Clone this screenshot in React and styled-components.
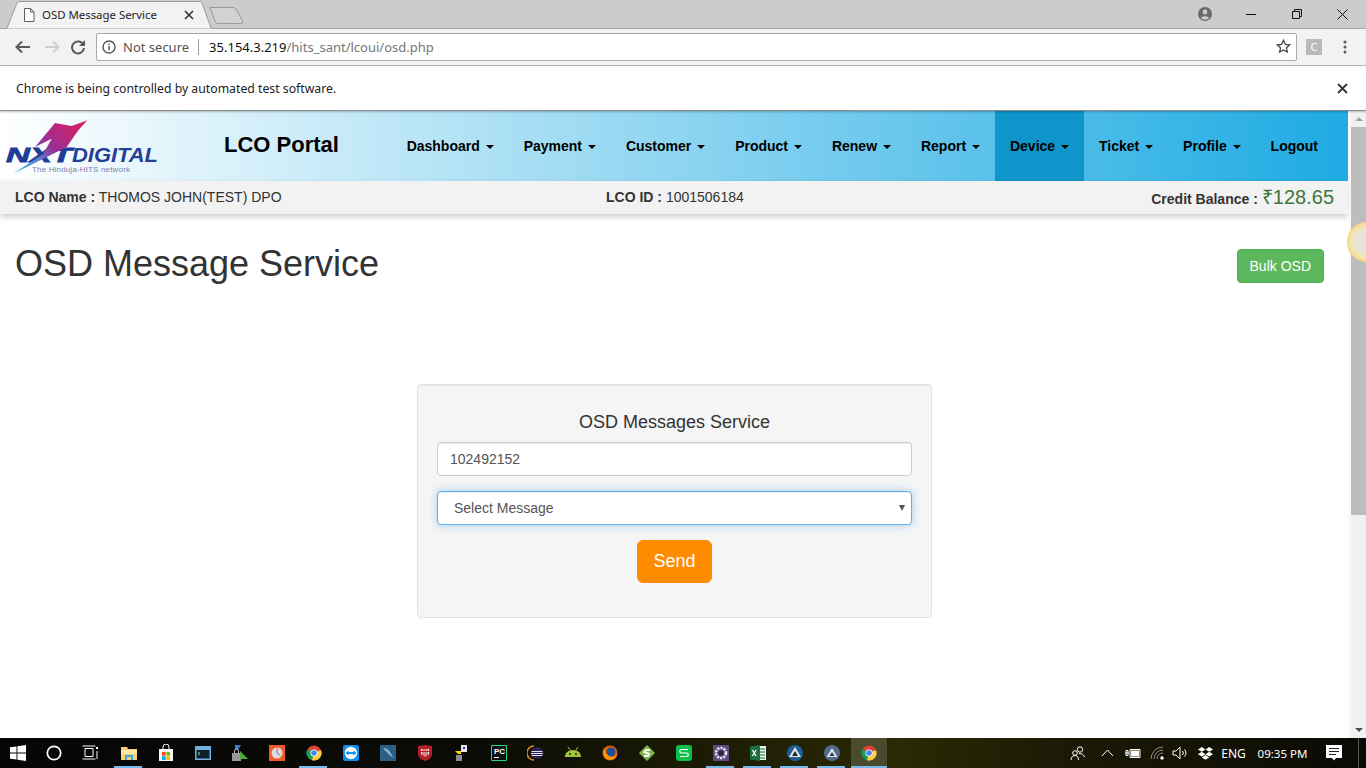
import styled, { createGlobalStyle } from 'styled-components';

const GlobalStyle = createGlobalStyle`
  html, body {
    margin: 0;
    padding: 0;
    height: 768px;
    overflow: hidden;
    background: #fff;
    font-family: "Liberation Sans", Arial, sans-serif;
  }
  * { box-sizing: border-box; }
`;

const UI_FONT = `"Noto Sans", "Open Sans", sans-serif`;

const Screen = styled.div`
  width: 1366px;
  height: 768px;
  display: flex;
  flex-direction: column;
  overflow: hidden;
  position: relative;
`;

/* ---------- browser chrome ---------- */

const TabStrip = styled.div`
  height: 29px;
  background: #cccccc;
  border-bottom: 1px solid #a6a6a6;
  display: flex;
  align-items: flex-start;
  padding-left: 5px;
`;

const Tab = styled.div`
  position: relative;
  width: 208px;
  height: 29px;
  display: flex;
  align-items: center;
  padding: 0 0 0 18px;
  font: 11.4px ${UI_FONT};
  color: #222;
  flex: none;
`;

const TabShape = styled.svg`
  position: absolute;
  left: 0;
  top: 0;
`;

const TabIcon = styled.svg`
  position: relative;
  margin-right: 7px;
`;

const TabTitle = styled.span`
  position: relative;
  width: 142px;
  white-space: nowrap;
`;

const TabClose = styled.svg`
  position: relative;
`;

const NewTab = styled.svg`
  margin: 6px 0 0 -4px;
  flex: none;
`;

const WindowButtons = styled.div`
  margin-left: auto;
  margin-right: 1px;
  display: flex;
  align-items: center;
  height: 28px;
`;

const WindowCell = styled.div`
  width: ${(p) => p.$w}px;
  display: flex;
  justify-content: center;
`;

const Toolbar = styled.div`
  height: 37px;
  background: #f2f2f2;
  border-bottom: 1px solid #b4b4b4;
  display: flex;
  align-items: center;
  padding-left: 14px;
`;

const NavIcon = styled.svg`
  flex: none;
  margin-right: ${(p) => p.$mr || 0}px;
  margin-left: ${(p) => p.$ml || 0};
`;

const Omnibox = styled.div`
  width: 1201px;
  height: 28px;
  margin: -1px 0 0 9px;
  background: #fff;
  border: 1px solid #a9a9a9;
  border-radius: 2px;
  display: flex;
  align-items: center;
  padding-left: 5px;
  font: 13px ${UI_FONT};
  color: #555;
  flex: none;
`;

const Divider = styled.span`
  width: 1px;
  height: 16px;
  background: #9a9a9a;
  margin: 0 10px 0 9px;
`;

const Host = styled.span`
  color: #111;
`;

const Path = styled.span`
  color: #777;
`;

const ExtBadge = styled.div`
  width: 16px;
  height: 16px;
  margin-left: 9px;
  background: #b9b9b9;
  color: #fff;
  font: 11px/16px ${UI_FONT};
  text-align: center;
  flex: none;
`;

const InfoBar = styled.div`
  height: 45px;
  background: #fff;
  border-bottom: 1px solid #8d8d8d;
  box-shadow: 0 1px 2px rgba(0, 0, 0, 0.25);
  display: flex;
  align-items: center;
  justify-content: space-between;
  padding: 0 18px 0 16px;
  font: 12.25px ${UI_FONT};
  color: #222;
  position: relative;
  z-index: 2;
`;

/* ---------- page ---------- */

const Viewport = styled.div`
  flex: 1;
  display: flex;
  min-height: 0;
`;

const Page = styled.div`
  width: 1349px;
  background: #fff;
  display: flex;
  flex-direction: column;
`;

const Navbar = styled.div`
  height: 70px;
  margin-right: 1px;
  display: flex;
  align-items: stretch;
  background: linear-gradient(to right, #ffffff 0%, #1eabe3 100%);
`;

const LogoSvg = styled.svg`
  margin: 7px 0 0 4px;
  flex: none;
`;

const Brand = styled.div`
  margin-left: 64px;
  font-size: 22px;
  font-weight: 700;
  color: #000;
  line-height: 68px;
  white-space: nowrap;
`;

const Menu = styled.div`
  margin-left: auto;
  margin-right: 15px;
  display: flex;
`;

const MenuItem = styled.div`
  padding: 0 15px;
  font-size: 14px;
  font-weight: 700;
  color: #000;
  line-height: 70px;
  white-space: nowrap;
  background: ${(p) => (p.$active ? '#0e96cb' : 'transparent')};
`;

const Caret = styled.span`
  display: inline-block;
  width: 0;
  height: 0;
  margin-left: 2px;
  vertical-align: middle;
  border-top: 4px solid #000;
  border-left: 4px solid transparent;
  border-right: 4px solid transparent;
`;

const InfoStrip = styled.div`
  height: 33px;
  margin-right: 1px;
  background: #f2f2f2;
  box-shadow: 0 3px 6px rgba(0, 0, 0, 0.2);
  display: grid;
  grid-template-columns: 591px 1fr auto;
  align-items: center;
  padding: 0 14px 2px 15px;
  font-size: 14px;
  color: #333;
`;

const Strong = styled.b`
  font-weight: 700;
`;

const Credit = styled.div`
  display: flex;
  align-items: baseline;
  font-weight: 700;
`;

const Amount = styled.span`
  font-size: 20px;
  font-weight: 400;
  color: #3c763d;
  margin-left: 4px;
`;

const Header = styled.div`
  display: flex;
  justify-content: space-between;
  align-items: flex-start;
  padding: 30px 25px 0 15px;
  height: 70px;
`;

const Title = styled.h1`
  margin: 0;
  font-size: 36px;
  font-weight: 400;
  line-height: 40px;
  color: #333;
`;

const BulkButton = styled.button`
  margin-top: 5px;
  height: 34px;
  padding: 0 12px;
  background: #5cb85c;
  border: 1px solid #4cae4c;
  border-radius: 4px;
  color: #fff;
  font: 14px "Liberation Sans", Arial, sans-serif;
`;

const Card = styled.div`
  width: 515px;
  height: 234px;
  margin: 100px auto 0;
  padding: 27px 19px 0;
  background: #f5f5f5;
  border: 1px solid #e3e3e3;
  border-radius: 4px;
  box-shadow: inset 0 1px 1px rgba(0, 0, 0, 0.05);
  display: flex;
  flex-direction: column;
`;

const CardTitle = styled.h4`
  margin: 0 0 10px;
  font-size: 18px;
  font-weight: 400;
  line-height: 20px;
  color: #333;
  text-align: center;
`;

const TextField = styled.input`
  height: 34px;
  width: 100%;
  padding: 6px 12px;
  border: 1px solid #ccc;
  border-radius: 4px;
  background: #fff;
  box-shadow: inset 0 1px 1px rgba(0, 0, 0, 0.075);
  color: #555;
  font: 14px "Liberation Sans", Arial, sans-serif;
  outline: none;
`;

const SelectWrap = styled.div`
  position: relative;
  margin-top: 15px;
`;

const SelectField = styled.select`
  appearance: none;
  height: 34px;
  width: 100%;
  padding: 6px 16px;
  border: 1px solid #66afe9;
  border-radius: 4px;
  background: #fff;
  box-shadow: inset 0 1px 1px rgba(0, 0, 0, 0.075), 0 0 8px rgba(102, 175, 233, 0.6);
  color: #555;
  font: 14px "Liberation Sans", Arial, sans-serif;
  outline: none;
`;

const SelectArrow = styled.span`
  position: absolute;
  right: 7px;
  top: 14px;
  width: 0;
  height: 0;
  border-top: 6px solid #555;
  border-left: 3.5px solid transparent;
  border-right: 3.5px solid transparent;
`;

const SendButton = styled.button`
  align-self: center;
  margin-top: 15px;
  width: 75px;
  height: 43px;
  background: #ff8c00;
  border: 1px solid #ff8c00;
  border-radius: 6px;
  color: #fff;
  font: 18px "Liberation Sans", Arial, sans-serif;
`;

const ScrollTrack = styled.div`
  width: 17px;
  background: #f1f1f1;
  border-left: 2px solid #f8f8f8;
  display: flex;
  flex-direction: column;
  align-items: center;
  position: relative;
`;

const ScrollArrow = styled.span`
  width: 0;
  height: 0;
  margin: 6px 0;
  flex: none;
  border-left: 4px solid transparent;
  border-right: 4px solid transparent;
  ${(p) => (p.$down ? 'border-top: 4px solid #505050;' : 'border-bottom: 4px solid #a3a3a3;')}
`;

const ScrollThumb = styled.div`
  width: 100%;
  height: 388px;
  background: #bdbdbd;
  flex: none;
`;

const ScrollSpace = styled.div`
  flex: 1;
`;

const CursorHalo = styled.div`
  position: absolute;
  left: 1347px;
  top: 222px;
  width: 40px;
  height: 40px;
  border-radius: 50%;
  background: radial-gradient(circle closest-side, #e2e2dc 0%, #e8e6d8 60%, #f5e2a5 86%, #f8d67a 100%);
  z-index: 3;
`;

/* ---------- taskbar ---------- */

const Taskbar = styled.div`
  height: 30px;
  flex: none;
  display: flex;
  align-items: stretch;
  background: linear-gradient(to right, #060606 0%, #0b0b06 35%, #2a2a04 66%, #1b1a05 78%, #0a0a06 100%);
  position: relative;
  z-index: 4;
`;

const TaskCell = styled.div`
  width: ${(p) => p.$w || 37}px;
  flex: none;
  display: flex;
  align-items: center;
  justify-content: center;
  position: relative;
  margin-left: ${(p) => (p.$active ? 1 : 0)}px;
  background: ${(p) => (p.$active ? '#4a4a2c' : 'transparent')};

  &::after {
    content: '';
    display: ${(p) => (p.$running ? 'block' : 'none')};
    position: absolute;
    bottom: 0;
    height: 2px;
    left: ${(p) => (p.$active ? 0 : 4)}px;
    right: ${(p) => (p.$active ? 0 : 5)}px;
    background: #76b9ed;
  }
`;

const TaskGap = styled.div`
  width: ${(p) => p.$w}px;
  flex: none;
`;

const Tray = styled.div`
  margin-left: auto;
  display: flex;
  align-items: center;
  color: #fff;
  font: 12px ${UI_FONT};
`;

const TrayCell = styled.div`
  width: ${(p) => p.$w}px;
  display: flex;
  justify-content: center;
  white-space: nowrap;
  font-size: ${(p) => p.$fs || 12}px;
`;

const ShowDesktop = styled.div`
  width: 8px;
  align-self: stretch;
  border-left: 1px solid #555;
`;

/* ---------- drawings ---------- */

const Logo = () => (
  <LogoSvg width="156" height="60" viewBox="0 0 156 60">
    <defs>
      <linearGradient id="sw" x1="0" y1="1" x2="1" y2="0">
        <stop offset="0" stopColor="#28c3e0" />
        <stop offset="0.3" stopColor="#5d7fd0" />
        <stop offset="0.5" stopColor="#9a2f98" />
        <stop offset="1" stopColor="#e01f58" />
      </linearGradient>
    </defs>
    <text x="2" y="44" fontFamily="Liberation Sans" fontStyle="italic" fontWeight="700" fontSize="20" fill="#1f3c96" stroke="#1f3c96" strokeWidth="0.8" textLength="66" lengthAdjust="spacingAndGlyphs">
      NXT
    </text>
    <text x="68" y="44" fontFamily="Liberation Sans" fontStyle="italic" fontWeight="700" fontSize="20" fill="#233f97" textLength="86" lengthAdjust="spacingAndGlyphs">
      DIGITAL
    </text>
    <path
      d="M83.3 2.3 L67.7 8 L51 5 L31 29 L47.7 20.7 L39.3 35.7 L9.3 55.7 L62.7 29 L74.3 12.3 Z"
      fill="url(#sw)"
    />
    <text x="28" y="54" fontFamily="Liberation Sans" fontSize="8" fill="#7583b3" textLength="98" lengthAdjust="spacing">
      The Hinduja-HITS network
    </text>
  </LogoSvg>
);

const Chrome = ({ size = 16 }) => (
  <svg width={size} height={size} viewBox="0 0 16 16">
    <circle cx="8" cy="8" r="7.5" fill="#db4437" />
    <path d="M8 8 L1.5 4.2 A7.5 7.5 0 0 0 6 15.2 Z" fill="#0f9d58" />
    <path d="M8 8 L14.9 5 A7.5 7.5 0 0 1 6 15.2 Z" fill="#ffcd40" />
    <circle cx="8" cy="8" r="3.6" fill="#fff" />
    <circle cx="8" cy="8" r="2.8" fill="#4285f4" />
  </svg>
);

const ic = { width: 18, height: 18, viewBox: '0 0 18 18' };

const apps = [
  {
    running: true,
    icon: (
      <svg {...ic}>
        <path d="M1 3h6l1 2h9v11H1z" fill="#f3d274" />
        <path d="M1 6h16v4H1z" fill="#fbe8a6" />
        <path d="M5 11h8v5h-2v-3H7v3H5z" fill="#3ea8dc" />
      </svg>
    ),
  },
  {
    icon: (
      <svg {...ic}>
        <path d="M2 5h14v12H2z" fill="#f5f5f5" />
        <path d="M6 5V3a3 3 0 0 1 6 0v2" fill="none" stroke="#f5f5f5" />
        <path d="M5 8h3.7v3.7H5z" fill="#f25022" />
        <path d="M9.4 8h3.7v3.7H9.4z" fill="#7fba00" />
        <path d="M5 12.3h3.7V16H5z" fill="#00a4ef" />
        <path d="M9.4 12.3h3.7V16H9.4z" fill="#ffb900" />
      </svg>
    ),
  },
  {
    icon: (
      <svg {...ic}>
        <path d="M1 2h16v14H1z" fill="#6fb1dc" />
        <path d="M2.5 6h13v8.5h-13z" fill="#0d1f2b" />
        <path d="M4 8l2 1.5L4 11" fill="none" stroke="#9ccf6a" />
      </svg>
    ),
  },
  {
    icon: (
      <svg {...ic}>
        <path d="M4 1h6l-3 5H4z" fill="#3f78c9" />
        <path d="M1 9h9v8H1z" fill="#9a9a9a" />
        <path d="M3.5 9V7a2 2 0 0 1 4 0v2" fill="none" stroke="#bbb" />
        <path d="M9 7l8 8h-8z" fill="#49ad3c" />
      </svg>
    ),
  },
  {
    icon: (
      <svg {...ic}>
        <path d="M1 1h16v16H1z" fill="#f15a29" />
        <circle cx="9" cy="9" r="5.5" fill="#dcdcdc" />
        <path d="M9 9V4.5M9 9l3 2" stroke="#777" fill="none" />
      </svg>
    ),
  },
  { running: true, icon: <Chrome /> },
  {
    icon: (
      <svg {...ic}>
        <path d="M3 1h12a2 2 0 0 1 2 2v12a2 2 0 0 1-2 2H3a2 2 0 0 1-2-2V3a2 2 0 0 1 2-2z" fill="#0e8ee9" />
        <circle cx="9" cy="9" r="6.2" fill="#fff" />
        <path d="M3.5 9l3-2.5V8h5V6.5l3 2.5-3 2.5V10h-5v1.5z" fill="#0e8ee9" />
      </svg>
    ),
  },
  {
    icon: (
      <svg {...ic}>
        <path d="M1 1h16v16H1z" fill="#2a5f86" />
        <path d="M4 4c5 0 8 4 10 10-3-3-6-5-10-10z" fill="#8ab7d2" />
      </svg>
    ),
  },
  {
    icon: (
      <svg {...ic}>
        <path d="M2 2l7-1 7 1v8c0 4-4 6-7 7-3-1-7-3-7-7z" fill="#b3202a" />
        <path d="M5 5h8v5l-4 3-4-3z" fill="#eee" />
        <path d="M7 5v7M9 5v8M11 5v7M5 7.5h8" stroke="#b3202a" />
      </svg>
    ),
  },
  {
    icon: (
      <svg {...ic}>
        <path d="M8 1h6v7H8z" fill="#e8e8e8" />
        <path d="M2 7h6v3H5z" fill="#f8d800" />
        <path d="M3 11h6v6H3z" fill="#8d8d8d" />
        <path d="M10 3h2v2h-2z" fill="#1b3a8a" />
      </svg>
    ),
  },
  {
    icon: (
      <svg {...ic}>
        <path d="M1.5 1.5h15v15h-15z" fill="#111" stroke="#21d789" />
        <text x="4" y="10" fontFamily="Liberation Sans" fontSize="8" fontWeight="700" fill="#fff">
          PC
        </text>
        <path d="M4 13h5v1H4z" fill="#fff" />
      </svg>
    ),
  },
  {
    icon: (
      <svg {...ic}>
        <path d="M7 2a7 7 0 0 0 0 14" fill="none" stroke="#e08a25" strokeWidth="1.4" />
        <circle cx="10" cy="9" r="6" fill="#2c2255" />
        <path d="M4.5 7.5h11M4 9.5h12M4.5 11.5h11" stroke="#dcdcf0" />
      </svg>
    ),
  },
  {
    icon: (
      <svg {...ic}>
        <path d="M1 13c0-4 3-7 8-7s8 3 8 7z" fill="#a4c639" />
        <path d="M4 3l2 3M14 3l-2 3" stroke="#a4c639" />
        <circle cx="6" cy="10" r="0.9" fill="#111" />
        <circle cx="12" cy="10" r="0.9" fill="#111" />
      </svg>
    ),
  },
  {
    icon: (
      <svg {...ic}>
        <circle cx="9" cy="9" r="7.5" fill="#e66000" />
        <circle cx="10" cy="8" r="4.5" fill="#1f4e9e" />
        <path d="M3 4c1 4 3 8 8 9 2 0 4-1 5-3-1 5-6 7-10 5-3-2-5-6-3-11z" fill="#ff9500" />
      </svg>
    ),
  },
  {
    icon: (
      <svg {...ic}>
        <path d="M9 1l8 8-8 8-8-8z" fill="#7cb54a" />
        <path d="M12 6H8L6.5 8 11 10l-1 2H6" fill="none" stroke="#fff" strokeWidth="2" />
      </svg>
    ),
  },
  {
    icon: (
      <svg {...ic}>
        <rect x="1" y="1" width="16" height="16" rx="3" fill="#0bc04a" />
        <path d="M13 5.5H6.5a1.7 1.7 0 0 0 0 3.5h5a1.7 1.7 0 0 1 0 3.5H5" fill="none" stroke="#fff" strokeWidth="1.2" />
      </svg>
    ),
  },
  {
    running: true,
    icon: (
      <svg {...ic}>
        <path d="M1 1h16v16H1z" fill="#5e4a80" />
        <circle cx="9" cy="9" r="5" fill="none" stroke="#e8e8e8" strokeWidth="2.6" strokeDasharray="2.2 1" />
        <circle cx="9" cy="9" r="2.6" fill="#2e2440" />
      </svg>
    ),
  },
  {
    running: true,
    icon: (
      <svg {...ic}>
        <path d="M10 2h7v14h-7z" fill="#e8f2ec" />
        <path d="M11 5h5M11 8h5M11 11h5M11 14h5" stroke="#1d6f42" />
        <path d="M1 2.5L11 1v16L1 15.5z" fill="#1d6f42" />
        <path d="M3.5 6l3.5 6M7 6l-3.5 6" stroke="#fff" strokeWidth="1.3" />
      </svg>
    ),
  },
  {
    running: true,
    icon: (
      <svg {...ic}>
        <circle cx="9" cy="9" r="8" fill="#1f5f95" />
        <path d="M9 3l6 10H3z" fill="#e8e8e8" />
        <path d="M9 7l3 5H6z" fill="#1b2a3a" />
      </svg>
    ),
  },
  {
    running: true,
    icon: (
      <svg {...ic}>
        <circle cx="9" cy="9" r="8" fill="#556b8e" />
        <path d="M9 4l5.5 9h-11z" fill="#dfe3ea" />
        <path d="M9 8l2.5 4h-5z" fill="#2f3a4c" />
      </svg>
    ),
  },
];

const App = () => {
  const menu = ['Dashboard', 'Payment', 'Customer', 'Product', 'Renew', 'Report', 'Device', 'Ticket', 'Profile'];

  return (
    <Screen>
      <GlobalStyle />

      <TabStrip>
        <Tab>
          <TabShape width="208" height="29" viewBox="0 0 208 29">
            <path d="M0.5 28.5 L2 28 L12 3 Q13 1.5 15 1.5 L194 1.5 Q196 1.5 197 3 L206 28 L207.5 28.5" fill="#f2f2f2" stroke="#9a9a9a" />
          </TabShape>
          <TabIcon width="12" height="14" viewBox="0 0 12 14">
            <path d="M1.5 0.5h6l3.5 3.5v9.5h-9.5z M7.5 0.5v3.5h3.5" fill="#fff" stroke="#5f5f5f" />
          </TabIcon>
          <TabTitle>OSD Message Service</TabTitle>
          <TabClose width="10" height="10" viewBox="0 0 10 10">
            <path d="M1 1l8 8M9 1l-8 8" stroke="#333" strokeWidth="1.6" />
          </TabClose>
        </Tab>
        <NewTab width="36" height="19" viewBox="0 0 36 19">
          <path d="M1 1.5 L24 1.5 Q26 1.5 27 3 L34 16 Q34 17.5 32 17.5 L9 17.5 Q7 17.5 6.5 16 Z" fill="#d2d2d2" stroke="#9a9a9a" />
        </NewTab>
        <WindowButtons>
          <WindowCell $w={46}>
            <svg width="14" height="14" viewBox="0 0 14 14">
              <circle cx="7" cy="7" r="7" fill="#6a6a6a" />
              <circle cx="7" cy="5" r="2.4" fill="#ccc" />
              <path d="M2.8 11c1-2.4 7.4-2.4 8.4 0a6 6 0 0 1-8.4 0z" fill="#ccc" />
            </svg>
          </WindowCell>
          <WindowCell $w={46}>
            <svg width="10" height="10" viewBox="0 0 10 10">
              <path d="M0 5.5h10" stroke="#111" />
            </svg>
          </WindowCell>
          <WindowCell $w={46}>
            <svg width="10" height="10" viewBox="0 0 10 10">
              <path d="M0.5 2.5h7v7h-7z M2.5 2.5v-2h7v7h-2" fill="none" stroke="#111" />
            </svg>
          </WindowCell>
          <WindowCell $w={45}>
            <svg width="11" height="11" viewBox="0 0 11 11">
              <path d="M0.5 0.5l10 10M10.5 0.5l-10 10" stroke="#111" />
            </svg>
          </WindowCell>
        </WindowButtons>
      </TabStrip>

      <Toolbar>
        <NavIcon width="18" height="14" viewBox="0 0 18 14" $mr={11}>
          <path d="M16 7H3M8 1.5L2.5 7 8 12.5" fill="none" stroke="#5a5a5a" strokeWidth="2" />
        </NavIcon>
        <NavIcon width="18" height="14" viewBox="0 0 18 14" $mr={9}>
          <path d="M2 7h13M10 1.5L15.5 7 10 12.5" fill="none" stroke="#cfcfcf" strokeWidth="2" />
        </NavIcon>
        <NavIcon width="16" height="16" viewBox="0 0 16 16" $mr={1}>
          <path d="M13.5 6A6 6 0 1 0 14 9" fill="none" stroke="#5a5a5a" strokeWidth="2" />
          <path d="M15 1v6H9z" fill="#5a5a5a" />
        </NavIcon>
        <Omnibox>
          <NavIcon width="14" height="14" viewBox="0 0 14 14" $mr={7}>
            <circle cx="7" cy="7" r="6" fill="none" stroke="#555" strokeWidth="1.4" />
            <path d="M7 6v4.2M7 3.4v1.6" stroke="#555" strokeWidth="1.5" />
          </NavIcon>
          Not secure
          <Divider />
          <Host>35.154.3.219</Host>
          <Path>/hits_sant/lcoui/osd.php</Path>
          <NavIcon width="15" height="15" viewBox="0 0 15 15" $ml="auto" $mr={5}>
            <path d="M7.5 1.3l1.9 4 4.3.5-3.2 3 .9 4.3-3.9-2.2-3.9 2.2.9-4.3-3.2-3 4.3-.5z" fill="none" stroke="#444" strokeWidth="1.3" />
          </NavIcon>
        </Omnibox>
        <ExtBadge>C</ExtBadge>
        <NavIcon width="4" height="14" viewBox="0 0 4 14" $ml="21px">
          <circle cx="2" cy="2" r="1.5" fill="#5a5a5a" />
          <circle cx="2" cy="7" r="1.5" fill="#5a5a5a" />
          <circle cx="2" cy="12" r="1.5" fill="#5a5a5a" />
        </NavIcon>
      </Toolbar>

      <InfoBar>
        <span>Chrome is being controlled by automated test software.</span>
        <svg width="11" height="11" viewBox="0 0 11 11">
          <path d="M1 1l9 9M10 1l-9 9" stroke="#333" strokeWidth="1.8" />
        </svg>
      </InfoBar>

      <Viewport>
        <Page>
          <Navbar>
            <Logo />
            <Brand>LCO Portal</Brand>
            <Menu>
              {menu.map((item) => (
                <MenuItem key={item} $active={item === 'Device'}>
                  {item} <Caret />
                </MenuItem>
              ))}
              <MenuItem>Logout</MenuItem>
            </Menu>
          </Navbar>

          <InfoStrip>
            <div>
              <Strong>LCO Name :</Strong> THOMOS JOHN(TEST) DPO
            </div>
            <div>
              <Strong>LCO ID :</Strong> 1001506184
            </div>
            <Credit>
              Credit Balance :<Amount>₹128.65</Amount>
            </Credit>
          </InfoStrip>

          <Header>
            <Title>OSD Message Service</Title>
            <BulkButton>Bulk OSD</BulkButton>
          </Header>

          <Card>
            <CardTitle>OSD Messages Service</CardTitle>
            <TextField defaultValue="102492152" />
            <SelectWrap>
              <SelectField defaultValue="">
                <option value="">Select Message</option>
              </SelectField>
              <SelectArrow />
            </SelectWrap>
            <SendButton>Send</SendButton>
          </Card>
        </Page>

        <ScrollTrack>
          <ScrollArrow />
          <ScrollThumb />
          <ScrollSpace />
          <ScrollArrow $down />
        </ScrollTrack>
      </Viewport>

      <CursorHalo />

      <Taskbar>
        <TaskCell $w={36}>
          <svg width="16" height="16" viewBox="0 0 16 16">
            <path d="M0 2.3l6.5-.9v6.2H0zM7.4 1.3L16 0v7.6H7.4zM0 8.4h6.5v6.2L0 13.7zM7.4 8.4H16V16l-8.6-1.3z" fill="#fff" />
          </svg>
        </TaskCell>
        <TaskCell $w={36}>
          <svg width="16" height="16" viewBox="0 0 16 16">
            <circle cx="8" cy="8" r="6.7" fill="none" stroke="#fff" strokeWidth="1.7" />
          </svg>
        </TaskCell>
        <TaskCell $w={36}>
          <svg width="16" height="16" viewBox="0 0 16 16">
            <path d="M3 3.5h8v8H3zM0.5 1h13M0.5 14h13" fill="none" stroke="#fff" />
            <path d="M14 2h2v2h-2z" fill="#fff" />
            <path d="M15 6v8" stroke="#fff" />
          </svg>
        </TaskCell>
        <TaskGap $w={2} />
        {apps.map((app, i) => (
          <TaskCell key={i} $running={app.running}>
            {app.icon}
          </TaskCell>
        ))}
        <TaskCell $w={36} $active $running>
          <Chrome />
        </TaskCell>

        <Tray>
          <TrayCell $w={30}>
            <svg width="16" height="16" viewBox="0 0 16 16">
              <circle cx="10" cy="4.5" r="2.7" fill="none" stroke="#fff" />
              <circle cx="5" cy="8" r="2.3" fill="none" stroke="#fff" />
              <path d="M1 15c0-3 2-4.5 4-4.5s3.5 1.5 3.5 4.5M9 8.5c2.5 0 5 1 5.5 3.500" fill="none" stroke="#fff" />
            </svg>
          </TrayCell>
          <TrayCell $w={28}>
            <svg width="13" height="8" viewBox="0 0 13 8">
              <path d="M1 7l5.5-6L12 7" fill="none" stroke="#fff" />
            </svg>
          </TrayCell>
          <TrayCell $w={24}>
            <svg width="16" height="12" viewBox="0 0 16 12">
              <path d="M5 2.5h10v8H5z" fill="none" stroke="#fff" />
              <path d="M6 3.5h8v6H6z" fill="#fff" />
              <path d="M0 6h4M1 3.5h2V8.5H1z" stroke="#fff" fill="none" />
            </svg>
          </TrayCell>
          <TrayCell $w={25}>
            <svg width="16" height="14" viewBox="0 0 16 14">
              <path d="M1 13a12 12 0 0 1 12-12M4 13a9 9 0 0 1 9-9M7 13a6 6 0 0 1 6-6" fill="none" stroke="#8d8d8d" />
              <circle cx="12" cy="12" r="1.7" fill="#fff" />
            </svg>
          </TrayCell>
          <TrayCell $w={20}>
            <svg width="17" height="14" viewBox="0 0 17 14">
              <path d="M1 5h3l4-4v12l-4-4H1z" fill="none" stroke="#fff" />
              <path d="M10.5 5a3 3 0 0 1 0 4M12.5 3.5a5 5 0 0 1 0 7" fill="none" stroke="#fff" />
            </svg>
          </TrayCell>
          <TrayCell $w={30}>
            <svg width="15" height="13" viewBox="0 0 15 13">
              <path d="M3.75 0L7.5 2.4 3.75 4.8 0 2.4zM11.25 0L15 2.4l-3.75 2.4L7.5 2.4zM3.75 4.8L7.5 7.2 3.75 9.6 0 7.2zM11.25 4.8L15 7.2l-3.75 2.4L7.5 7.2zM7.5 8l3.75 2.4-3.75 2.4-3.75-2.4z" fill="#fff" />
            </svg>
          </TrayCell>
          <TrayCell $w={27}>ENG</TrayCell>
          <TrayCell $w={71} $fs={11.5}>09:35 PM</TrayCell>
          <TrayCell $w={31}>
            <svg width="16" height="16" viewBox="0 0 16 16">
              <path d="M0 0h16v13h-6l-2 2.5L6 13H0z" fill="#fff" />
              <path d="M3 3.5h10M3 6.5h10M3 9.5h7" stroke="#222" />
            </svg>
          </TrayCell>
          <TaskGap $w={9} />
          <ShowDesktop />
        </Tray>
      </Taskbar>
    </Screen>
  );
};

export default App;
